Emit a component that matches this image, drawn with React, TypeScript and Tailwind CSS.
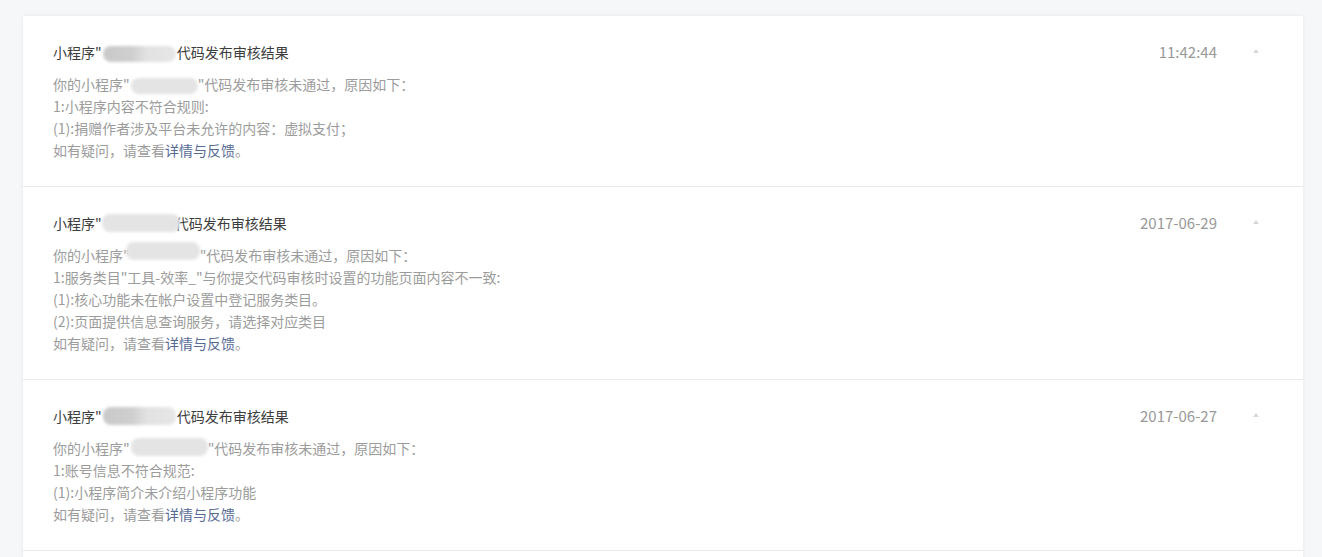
const Blur = ({ w, dark, className = '' }: { w: number; dark?: boolean; className?: string }) => (
  <span
    className={`inline-block align-middle h-[16px] rounded-[8px] blur-[1.5px] ${
      dark
        ? 'bg-[linear-gradient(90deg,#c9c9c9_0%,#cfcfcf_40%,#e2e2e2_60%,#e6e6e6_100%)]'
        : 'bg-[#e4e4e4]'
    } ${className}`}
    style={{ width: w }}
  />
);

type Msg = {
  time: string;
  titleBlur: { w: number; dark?: boolean; cls?: string };
  bodyBlur: { w: number; cls?: string };
  lines: string[];
};

const msgs: Msg[] = [
  {
    time: '11:42:44',
    titleBlur: { w: 73, dark: true, cls: 'mx-[1px]' },
    bodyBlur: { w: 67, cls: 'ml-[1px]' },
    lines: ['1:小程序内容不符合规则:', '(1):捐赠作者涉及平台未允许的内容：虚拟支付；'],
  },
  {
    time: '2017-06-29',
    titleBlur: { w: 78, cls: 'h-[18px] -translate-y-[2px] -mr-[5px]' },
    bodyBlur: { w: 74, cls: 'h-[18px] -translate-y-[6px] -ml-[4px]' },
    lines: [
      '1:服务类目"工具-效率_"与你提交代码审核时设置的功能页面内容不一致:',
      '(1):核心功能未在帐户设置中登记服务类目。',
      '(2):页面提供信息查询服务，请选择对应类目',
    ],
  },
  {
    time: '2017-06-27',
    titleBlur: { w: 73, dark: true, cls: 'h-[18px] mx-[1px] -translate-y-[2px]' },
    bodyBlur: { w: 77, cls: 'h-[18px] -translate-y-[3px] ml-[1px]' },
    lines: ['1:账号信息不符合规范:', '(1):小程序简介未介绍小程序功能'],
  },
];

const Item = ({ m }: { m: Msg }) => (
  <div className="flex items-start border-b border-[#e7e9ec] pl-[30px] pr-[44px] pt-[25px] pb-[25px]">
    <div className="flex-1">
      <div className="h-[22px] leading-[22px] text-[14px] text-[#3d3d3d] whitespace-nowrap">
        小程序"
        <Blur w={m.titleBlur.w} dark={m.titleBlur.dark} className={m.titleBlur.cls} />
        代码发布审核结果
      </div>
      <div className="mt-[10px] text-[14px] leading-[22px] text-[#9c9c9c]">
        <div className="whitespace-nowrap">
          你的小程序"
          <Blur w={m.bodyBlur.w} className={m.bodyBlur.cls} />
          "代码发布审核未通过，原因如下：
        </div>
        {m.lines.map((l, i) => (
          <div key={i}>{l}</div>
        ))}
        <div>
          如有疑问，请查看<a className="text-[#576b95]">详情与反馈</a>。
        </div>
      </div>
    </div>
    <span className="h-[22px] leading-[22px] text-[15px] text-[#999999]">{m.time}</span>
    <span className="ml-[36px] mt-[8px] w-0 h-0 border-x-[3.5px] border-x-transparent border-b-[4px] border-b-[#d8d8d8]" />
  </div>
);

export default function App() {
  return (
    <div
      className="min-h-screen bg-[#f6f7f9] px-[23px] pt-[16px] pr-[19px]"
      style={{ fontFamily: '"Noto Sans CJK SC", "Noto Sans", sans-serif' }}
    >
      <div className="bg-white shadow-[0_0_4px_rgba(0,0,0,0.07)]">
        {msgs.map((m, i) => (
          <Item key={i} m={m} />
        ))}
        <div className="h-[20px]" />
      </div>
    </div>
  );
}
